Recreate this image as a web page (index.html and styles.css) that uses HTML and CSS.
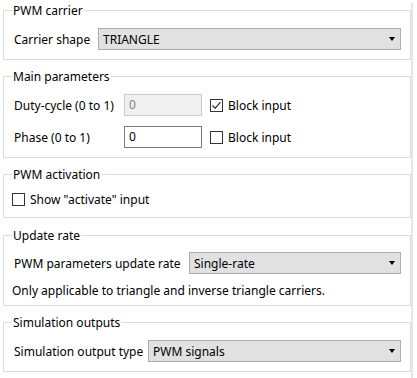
FILE: index.html
```html
<!DOCTYPE html>
<html lang="en">
<head>
<meta charset="UTF-8">
<title>PWM block parameters</title>
<link rel="stylesheet" href="styles.css">
</head>
<body>

<div class="panel">

  <fieldset class="group group-carrier">
    <legend>PWM carrier</legend>
    <div class="row">
      <span class="label label-carrier">Carrier shape</span>
      <div class="combo"><span>TRIANGLE</span><span class="arrow"></span></div>
    </div>
  </fieldset>

  <fieldset class="group group-main">
    <legend>Main parameters</legend>
    <div class="row">
      <span class="label label-main">Duty-cycle (0 to 1)</span>
      <div class="edit disabled">0</div>
      <span class="check checked">
        <svg width="11" height="11" viewBox="0 0 11 11"><path d="M1.5 5.5 L4.2 8.2 L9.5 2.2" fill="none" stroke="#222" stroke-width="1.1"/></svg>
      </span>
      <span class="check-text">Block input</span>
    </div>
    <div class="row">
      <span class="label label-main">Phase (0 to 1)</span>
      <div class="edit">0</div>
      <span class="check"></span>
      <span class="check-text">Block input</span>
    </div>
  </fieldset>

  <fieldset class="group group-activation">
    <legend>PWM activation</legend>
    <div class="row row-check">
      <span class="check"></span>
      <span class="check-text">Show "activate" input</span>
    </div>
  </fieldset>

  <fieldset class="group group-rate">
    <legend>Update rate</legend>
    <div class="row">
      <span class="label label-rate">PWM parameters update rate</span>
      <div class="combo"><span>Single-rate</span><span class="arrow"></span></div>
    </div>
    <p class="note">Only applicable to triangle and inverse triangle carriers.</p>
  </fieldset>

  <fieldset class="group group-outputs">
    <legend>Simulation outputs</legend>
    <div class="row">
      <span class="label label-outputs">Simulation output type</span>
      <div class="combo"><span>PWM signals</span><span class="arrow"></span></div>
    </div>
  </fieldset>

</div>

</body>
</html>
```

FILE: styles.css
```css
body {
  margin: 0;
  padding: 0;
  background: #fff;
  color: #000;
  font-family: 'Noto Sans', 'Open Sans', sans-serif;
  font-size: 12px;
  overflow: hidden;
}

.panel {
  width: 413px;
  height: 378px;
  box-sizing: border-box;
  padding-left: 3px;
  border-right: 2px solid #e6e6e6;
}

.group {
  width: 408px;
  box-sizing: border-box;
  margin: 9px 0 0;
  padding: 10px 9px 9px 8px;
  border: 1px solid #dcdcdc;
  min-inline-size: 0;
}

.group legend {
  padding: 0 1px;
  line-height: 15px;
}

.group-carrier { margin-top: 3px; }
.group-activation { padding-top: 8px; }
.group-rate { margin-top: 10px; padding-top: 9px; padding-bottom: 6px; }

.row {
  display: flex;
  align-items: center;
  height: 22px;
}

.row + .row { margin-top: 10px; }

.row-check { height: 18px; }

.label {
  flex: none;
  padding-left: 2px;
  box-sizing: border-box;
  white-space: nowrap;
}

.label-carrier { width: 86px; }
.label-main { width: 112px; }
.label-rate { width: 177px; }
.label-outputs { width: 136px; }

.combo {
  flex: 1;
  display: flex;
  align-items: center;
  justify-content: space-between;
  height: 22px;
  box-sizing: border-box;
  padding: 0 5px 0 4px;
  background: #e1e1e1;
  border: 1px solid #adadad;
}

.arrow {
  width: 0;
  height: 0;
  border-left: 3.5px solid transparent;
  border-right: 3.5px solid transparent;
  border-top: 4px solid #000;
}

.edit {
  flex: none;
  width: 78px;
  height: 22px;
  box-sizing: border-box;
  padding-left: 4px;
  line-height: 20px;
  border: 1px solid #7a7a7a;
  background: #fff;
}

.edit.disabled {
  border-color: #cccccc;
  background: #f0f0f0;
  color: #838383;
}

.check {
  flex: none;
  display: flex;
  align-items: center;
  justify-content: center;
  width: 13px;
  height: 13px;
  box-sizing: border-box;
  margin-left: 8px;
  border: 1px solid #333;
  background: #fff;
}

.row-check .check { margin-left: 0; }

.check-text {
  margin-left: 5px;
  white-space: nowrap;
}

.note {
  margin: 9px 0 0;
  line-height: 16px;
  white-space: nowrap;
}
```
